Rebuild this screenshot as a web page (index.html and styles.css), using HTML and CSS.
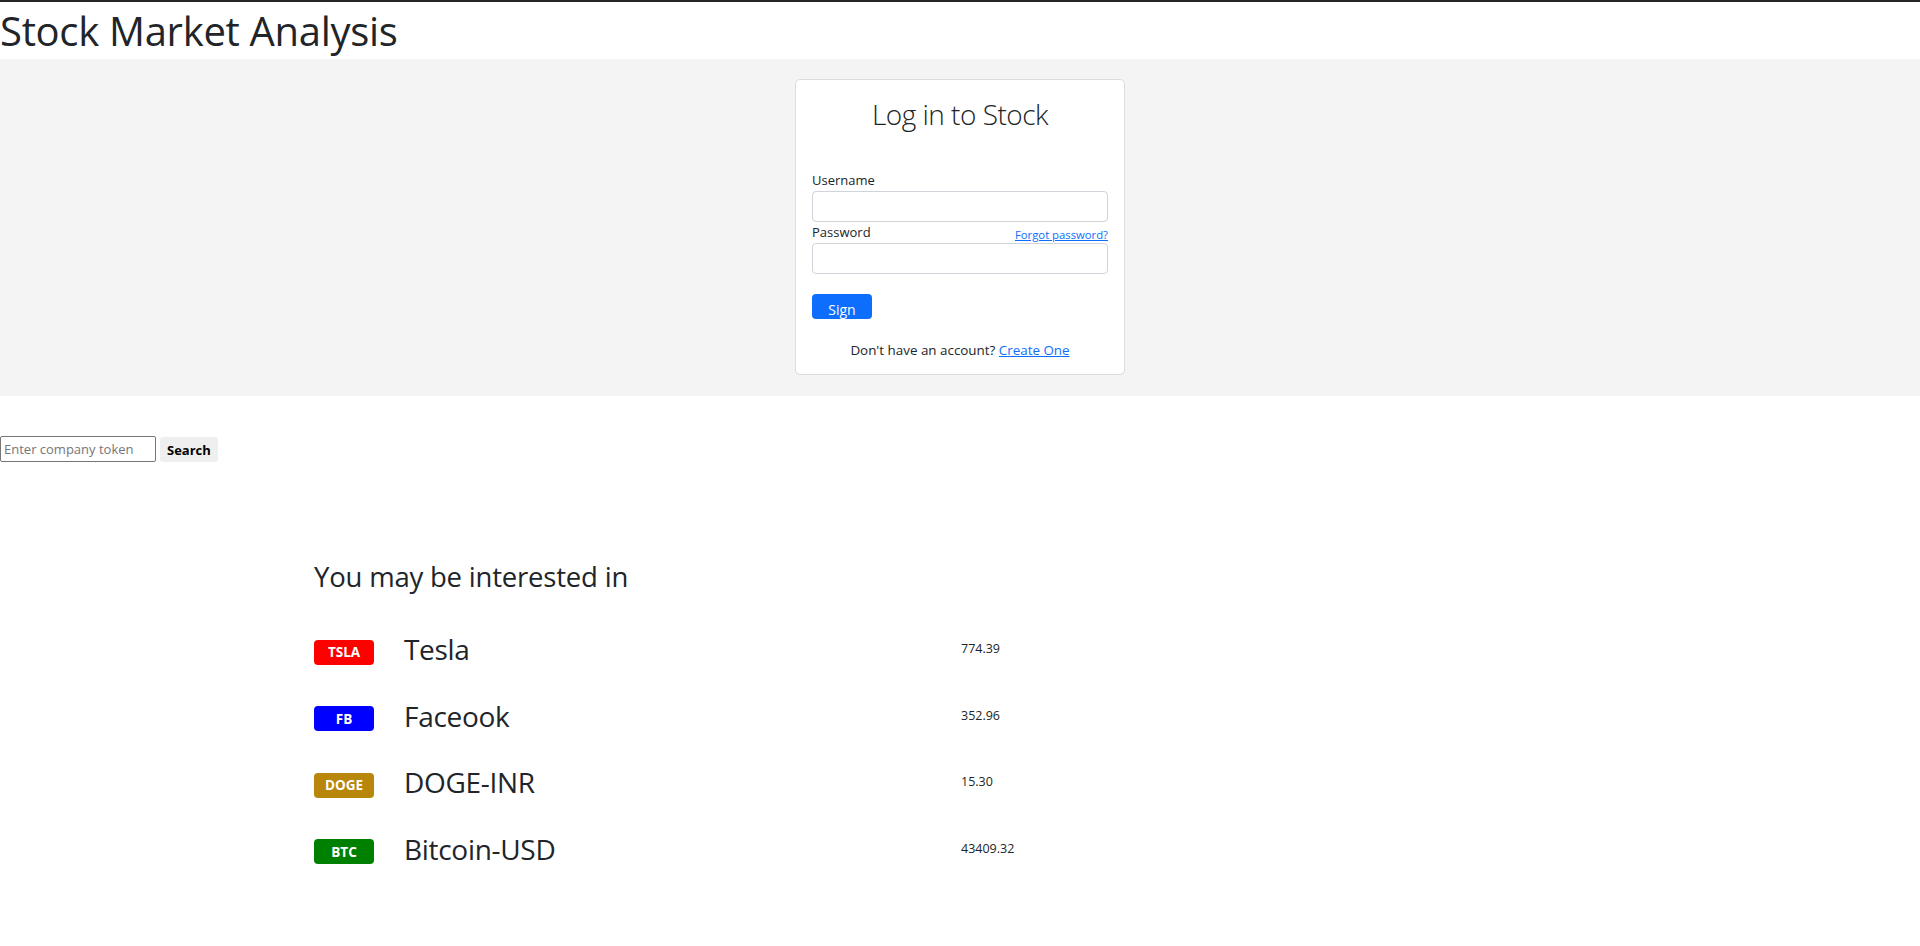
FILE: index.html
```html
<!DOCTYPE html>
<html lang="en">
<head>
<meta charset="utf-8">
<title>Stock Market Analysis</title>
<link rel="stylesheet" href="styles.css">
</head>
<body>
<header class="topbar">
  <h1 class="site-title">Stock Market Analysis</h1>
</header>

<section class="login-band">
  <form class="login-card">
    <h2 class="login-title">Log in to Stock</h2>
    <label class="field-label" for="username">Username</label>
    <input class="field-input" id="username" type="text">
    <div class="label-row">
      <label class="field-label" for="password">Password</label>
      <a class="forgot-link" href="#">Forgot password?</a>
    </div>
    <input class="field-input" id="password" type="password">
    <button class="sign-btn" type="button">Sign</button>
    <p class="signup-text">Don't have an account? <a class="signup-link" href="#">Create One</a></p>
  </form>
</section>

<section class="search-row">
  <input class="search-input" type="text" placeholder="Enter company token">
  <button class="search-btn" type="button">Search</button>
</section>

<section class="interest">
  <h3 class="interest-title">You may be interested in</h3>
  <ul class="stock-list">
    <li class="stock-row">
      <span class="badge badge-tsla">TSLA</span>
      <span class="stock-name">Tesla</span>
      <span class="stock-price">774.39</span>
    </li>
    <li class="stock-row">
      <span class="badge badge-fb">FB</span>
      <span class="stock-name">Faceook</span>
      <span class="stock-price">352.96</span>
    </li>
    <li class="stock-row">
      <span class="badge badge-doge">DOGE</span>
      <span class="stock-name">DOGE-INR</span>
      <span class="stock-price">15.30</span>
    </li>
    <li class="stock-row">
      <span class="badge badge-btc">BTC</span>
      <span class="stock-name">Bitcoin-USD</span>
      <span class="stock-price">43409.32</span>
    </li>
  </ul>
</section>
</body>
</html>
```

FILE: styles.css
```css
* { box-sizing: border-box; }

html, body {
  margin: 0;
  padding: 0;
  background: #ffffff;
  color: #212529;
  font-family: "Open Sans", "Noto Sans", sans-serif;
}

.topbar {
  border-top: 2px solid #262626;
}

.site-title {
  margin: 0 0 4px 0;
  padding-top: 4px;
  font-size: 40px;
  line-height: 49px;
  font-weight: 500;
  letter-spacing: -0.3px;
}

.login-band {
  background: #f4f4f4;
  padding: 20px 0 21px;
  display: flex;
  justify-content: center;
}

.login-card {
  width: 330px;
  background: #ffffff;
  border: 1px solid #dcdcdc;
  border-radius: 5px;
  padding: 14px 16px 15px;
  display: flex;
  flex-direction: column;
}

.login-title {
  margin: 0 0 38px;
  text-align: center;
  font-size: 28px;
  line-height: 40px;
  font-weight: 300;
  letter-spacing: -0.5px;
}

.field-label {
  font-size: 13px;
  line-height: 17px;
  display: block;
  margin-bottom: 2px;
}

.label-row {
  display: flex;
  justify-content: space-between;
  align-items: flex-end;
  margin-top: 2px;
}

.forgot-link {
  font-size: 11.3px;
  line-height: 17px;
  color: #0d6efd;
  text-decoration: underline;
}

.field-input {
  height: 31px;
  width: 100%;
  border: 1px solid #ced4da;
  border-radius: 4px;
  background: #fff;
  font: inherit;
}

.sign-btn {
  margin-top: 20px;
  width: 60px;
  height: 25px;
  border: none;
  border-radius: 4px;
  background: #0d6efd;
  color: #fff;
  font-family: inherit;
  font-size: 14px;
  padding: 6px 0 0;
  line-height: 19px;
}

.signup-text {
  margin: 23px 0 0;
  text-align: center;
  font-size: 13.4px;
  line-height: 17px;
}

.signup-link {
  color: #0d6efd;
  text-decoration: underline;
}

.search-row {
  display: flex;
  gap: 4px;
  padding-top: 40px;
  align-items: flex-start;
}

.search-input {
  width: 156px;
  height: 26px;
  margin: 0;
  border: 1px solid #767676;
  border-radius: 2px;
  padding: 1px 3px;
  font-family: inherit;
  font-size: 13px;
  color: #212529;
}

.search-input::placeholder {
  color: #767676;
}

.search-btn {
  height: 25px;
  margin-top: 1px;
  padding: 0 7px;
  border: none;
  border-radius: 3px;
  background: #efefef;
  color: #000;
  font-family: inherit;
  font-weight: 700;
  font-size: 13px;
}

.interest {
  padding: 97px 0 0 314px;
}

.interest-title {
  margin: 0 0 35px;
  font-size: 27.5px;
  line-height: 36px;
  font-weight: 500;
  letter-spacing: -0.2px;
}

.stock-list {
  list-style: none;
  margin: 0;
  padding: 0;
  display: flex;
  flex-direction: column;
  gap: 28.5px;
}

.stock-row {
  display: grid;
  grid-template-columns: 60px 527px auto;
  column-gap: 30px;
  align-items: center;
  height: 38px;
}

.badge {
  height: 25px;
  border-radius: 4px;
  color: #fff;
  font-weight: 700;
  font-size: 13.5px;
  display: flex;
  align-items: center;
  justify-content: center;
  margin-top: 6px;
}

.badge-tsla { background: #ff0000; }
.badge-fb { background: #0000ff; }
.badge-doge { background: #b8860b; }
.badge-btc { background: #008000; }

.stock-name {
  font-size: 28px;
  line-height: 38px;
  font-weight: 500;
  letter-spacing: -0.3px;
}

.stock-price {
  font-size: 12.5px;
  line-height: 16px;
}
```
